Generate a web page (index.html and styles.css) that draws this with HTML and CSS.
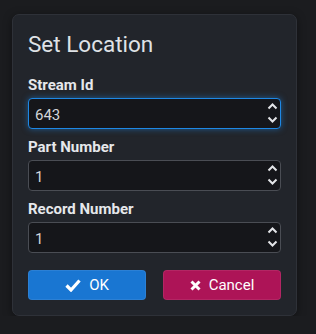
FILE: index.html
```html
<!DOCTYPE html>
<html lang="en">
<head>
    <meta charset="UTF-8">
    <title>Set Location</title>
    <link rel="stylesheet" href="styles.css">
</head>
<body>
    <div class="dialog">
        <h2 class="dialog-title">Set Location</h2>

        <div class="field">
            <label class="field-label">Stream Id</label>
            <div class="number-input focused">
                <span class="value">643</span>
                <svg class="spinner" width="11" height="29" viewBox="0 0 11 29"><path d="M1.5 9.5 L5.5 5.5 L9.5 9.5 M1.5 18.5 L5.5 22.5 L9.5 18.5" fill="none" stroke="#e3e5e8" stroke-width="2"/></svg>
            </div>
        </div>

        <div class="field">
            <label class="field-label">Part Number</label>
            <div class="number-input">
                <span class="value">1</span>
                <svg class="spinner" width="11" height="29" viewBox="0 0 11 29"><path d="M1.5 9.5 L5.5 5.5 L9.5 9.5 M1.5 18.5 L5.5 22.5 L9.5 18.5" fill="none" stroke="#e3e5e8" stroke-width="2"/></svg>
            </div>
        </div>

        <div class="field">
            <label class="field-label">Record Number</label>
            <div class="number-input">
                <span class="value">1</span>
                <svg class="spinner" width="11" height="29" viewBox="0 0 11 29"><path d="M1.5 9.5 L5.5 5.5 L9.5 9.5 M1.5 18.5 L5.5 22.5 L9.5 18.5" fill="none" stroke="#e3e5e8" stroke-width="2"/></svg>
            </div>
        </div>

        <div class="dialog-buttons">
            <button class="btn btn-ok">
                <svg width="16" height="14" viewBox="0 0 16 14"><path d="M1.5 7.5 L6 12 L14.5 2.5" fill="none" stroke="#fff" stroke-width="3.2"/></svg>
                OK
            </button>
            <button class="btn btn-cancel">
                <svg width="11" height="11" viewBox="0 0 11 11"><path d="M1.5 1.5 L9.5 9.5 M9.5 1.5 L1.5 9.5" fill="none" stroke="#fff" stroke-width="3"/></svg>
                Cancel
            </button>
        </div>
    </div>
</body>
</html>
```

FILE: styles.css
```css
body {
    font-family: Roboto, 'Noto Sans', sans-serif;
    background-color: #1b1c1f;
    margin: 0;
    padding: 14px 0 0 12px;
}

.dialog {
    width: 253px;
    background-color: #22252b;
    border: 1px solid #2e3138;
    border-radius: 7px;
    padding: 16px 15px 15px 15px;
    box-shadow: 0 2px 10px rgba(0, 0, 0, 0.4);
}

.dialog-title {
    margin: 0 0 19px 0;
    font-size: 22.5px;
    line-height: 26px;
    font-weight: 400;
    color: #dfe2e6;
}

.field {
    margin-bottom: 9px;
}

.field-label {
    display: block;
    font-size: 15px;
    line-height: 18px;
    font-weight: 700;
    color: #e6e8eb;
    margin-bottom: 4px;
}

.number-input {
    height: 29px;
    border: 1px solid #4a4d54;
    border-radius: 4px;
    background-color: #15161a;
    display: flex;
    align-items: center;
    justify-content: space-between;
    padding: 0 2px 0 6px;
}

.number-input.focused {
    border-color: #1e88e5;
    box-shadow: 0 0 6px rgba(30, 136, 229, 0.55);
}

.value {
    font-size: 15px;
    color: #d3d5d9;
    padding-top: 2px;
}

/* sibling margins collapse with .field's 9px, so this gives a 17px gap */
.dialog-buttons {
    display: flex;
    gap: 17px;
    margin-top: 17px;
}

.btn {
    flex: 1;
    height: 30px;
    border: 1px solid rgba(255, 255, 255, 0.08);
    border-radius: 4px;
    color: #fff;
    font-family: inherit;
    font-size: 15px;
    display: flex;
    align-items: center;
    justify-content: center;
    gap: 8px;
    cursor: pointer;
}

.btn-ok {
    background-color: #1976d2;
}

.btn-cancel {
    background-color: #ad1457;
}
```
